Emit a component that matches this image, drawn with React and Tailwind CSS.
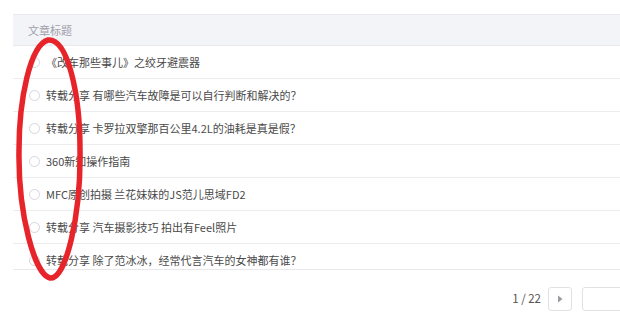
const rows = [
  '《改车那些事儿》之绞牙避震器',
  '转载分享 有哪些汽车故障是可以自行判断和解决的？',
  '转载分享 卡罗拉双擎那百公里4.2L的油耗是真是假？',
  '360新知操作指南',
  'MFC原创拍摄 兰花妹妹的JS范儿思域FD2',
  '转载分享 汽车摄影技巧 拍出有Feel照片',
  '转载分享 除了范冰冰，经常代言汽车的女神都有谁？',
];

export default function App() {
  return (
    <div className="relative w-[620px] h-[314px] overflow-hidden bg-white font-['Noto_Sans_CJK_SC',sans-serif]">
      <div className="pt-[14px] pl-[13px]">
        {/* table */}
        <div className="w-[620px] h-[256px] overflow-hidden border-b border-[#e8e8ec]">
          <div className="h-[32px] flex items-center pl-[15px] bg-[#f3f4f8] border-t border-b border-[#e9e9ee] text-[11px] text-[#a0a0a8]">
            文章标题
          </div>
          {rows.map((t) => (
            <div key={t} className="h-[33px] flex items-center border-b border-[#ececf0]">
              <span className="ml-[16px] w-[11px] h-[11px] rounded-full border border-[#d6d6dc] bg-white shrink-0" />
              <span className="ml-[6px] text-[11px] text-[#4a4a4a] whitespace-nowrap">{t}</span>
            </div>
          ))}
        </div>

        {/* pagination */}
        <div className="flex items-center justify-end mt-[17px] -mr-[24px]">
          <span className="text-[11.5px] text-[#555] mr-[7px]">1 / 22</span>
          <button className="w-[24px] h-[24px] flex items-center justify-center border border-[#e2e2e6] rounded-[3px] bg-white">
            <svg width="6" height="8" viewBox="0 0 6 8">
              <path d="M1 0.5 L5.5 4 L1 7.5 Z" fill="#9a9aa2" />
            </svg>
          </button>
          <div className="ml-[10px] w-[62px] h-[24px] border border-[#e2e2e6] rounded-[3px] bg-white" />
        </div>
      </div>

      {/* red hand-drawn mark */}
      <svg className="absolute left-0 top-0 pointer-events-none" width="620" height="314">
        <path
          d="M48 40 C 30 45, 19 100, 19 150 C 18 215, 35 275, 50 278 C 66 280, 81 215, 80 150 C 80 95, 68 38, 48 40 Z"
          fill="none"
          stroke="#e8242b"
          strokeWidth="5.5"
        />
      </svg>
    </div>
  );
}
